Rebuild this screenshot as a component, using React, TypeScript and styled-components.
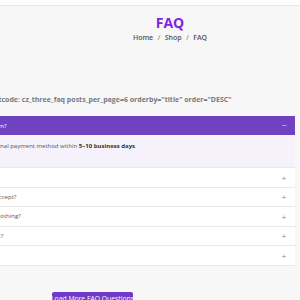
import React from "react";
import styled, { createGlobalStyle } from "styled-components";

const Global = createGlobalStyle`
  html, body { margin: 0; padding: 0; }
  body {
    background: #f7f7f7;
    font-family: "Open Sans", "Liberation Sans", sans-serif;
    color: #555;
    overflow: hidden;
    width: 300px;
    height: 300px;
  }
`;

const Page = styled.div`
  width: 300px;
  height: 300px;
  overflow: hidden;
`;

const TopBar = styled.div`
  height: 5px;
  background: #ffffff;
  border-bottom: 1px solid #e9e9e9;
`;

const TitleBlock = styled.div`
  width: 340px;
  display: flex;
  flex-direction: column;
  align-items: center;
  padding-top: 7px;
`;

const Title = styled.h1`
  margin: 0;
  font-size: 14px;
  line-height: 20px;
  font-weight: 700;
  color: #8224e3;
`;

const Crumbs = styled.div`
  font-size: 7px;
  line-height: 10px;
  font-weight: 600;
  color: #555;
  display: flex;
  gap: 4.5px;
`;

const Sep = styled.span`
  font-weight: 400;
  color: #666;
`;

const Shortcode = styled.div`
  margin-top: 52px;
  margin-left: -17.5px;
  font-size: 7px;
  font-weight: 700;
  color: #7a7a7a;
  white-space: nowrap;
  line-height: 10px;
`;

const Accordion = styled.div`
  margin-top: 11px;
  margin-left: -111.4px;
  width: 406.4px;
  display: flex;
  flex-direction: column;
`;

const Item = styled.div<{ $open?: boolean }>`
  background: ${(p) => (p.$open ? "#f5f2fb" : "#ffffff")};
  border-bottom: 1px solid #e8e8e8;
`;

const Head = styled.div<{ $open?: boolean }>`
  height: ${(p) => (p.$open ? "19px" : "18.5px")};
  display: flex;
  align-items: center;
  justify-content: space-between;
  padding: 0 8px 0 12px;
  background: ${(p) => (p.$open ? "#6f42c1" : "transparent")};
  color: ${(p) => (p.$open ? "#ffffff" : "#555")};
  font-size: 6px;
  white-space: nowrap;
`;

const Sign = styled.span<{ $open?: boolean }>`
  font-size: ${(p) => (p.$open ? "9px" : "8px")};
  color: ${(p) => (p.$open ? "#d8c9f2" : "#888")};
  font-weight: 400;
  width: 6px;
  text-align: center;
`;

const Answer = styled.div`
  padding: 7px 12px 16px;
  font-size: 6px;
  line-height: 9px;
  white-space: nowrap;
  color: #555;
  b { color: #333; font-weight: 700; }
`;

const Footer = styled.div`
  margin-top: 26px;
  margin-left: 52px;
`;

const Button = styled.button`
  width: 81px;
  height: 14px;
  border: none;
  border-radius: 2px;
  background: #6e3cc8;
  color: #ffffff;
  font-family: "Open Sans", "Liberation Sans", sans-serif;
  font-size: 6.8px;
  font-weight: 500;
  padding: 2px 0 0;
  display: flex;
  justify-content: center;
  align-items: flex-start;
  white-space: nowrap;
`;

const questions = [
  { q: "When will I get my refund for an item?", open: true },
  { q: "Do you ship internationally?" },
  { q: "Which payment methods can you accept?" },
  { q: "How should I wash and steam my clothing?" },
  { q: "Can I cancel my order after I place it?" },
  { q: "How do I track my order?" },
];

export default function App() {
  return (
    <Page>
      <Global />
      <TopBar />
      <TitleBlock>
        <Title>FAQ</Title>
        <Crumbs>
          <span>Home</span>
          <Sep>/</Sep>
          <span>Shop</span>
          <Sep>/</Sep>
          <span>FAQ</span>
        </Crumbs>
      </TitleBlock>
      <Shortcode>
        Shortcode: cz_three_faq posts_per_page=6 orderby="title" order="DESC"
      </Shortcode>
      <Accordion>
        {questions.map((item) => (
          <Item key={item.q} $open={item.open}>
            <Head $open={item.open}>
              <span>{item.q}</span>
              <Sign $open={item.open}>{item.open ? "−" : "+"}</Sign>
            </Head>
            {item.open && (
              <Answer>
                Refunds are processed to your original payment method within{" "}
                <b>5–10 business days</b>.
              </Answer>
            )}
          </Item>
        ))}
      </Accordion>
      <Footer>
        <Button>Load More FAQ Questions</Button>
      </Footer>
    </Page>
  );
}
